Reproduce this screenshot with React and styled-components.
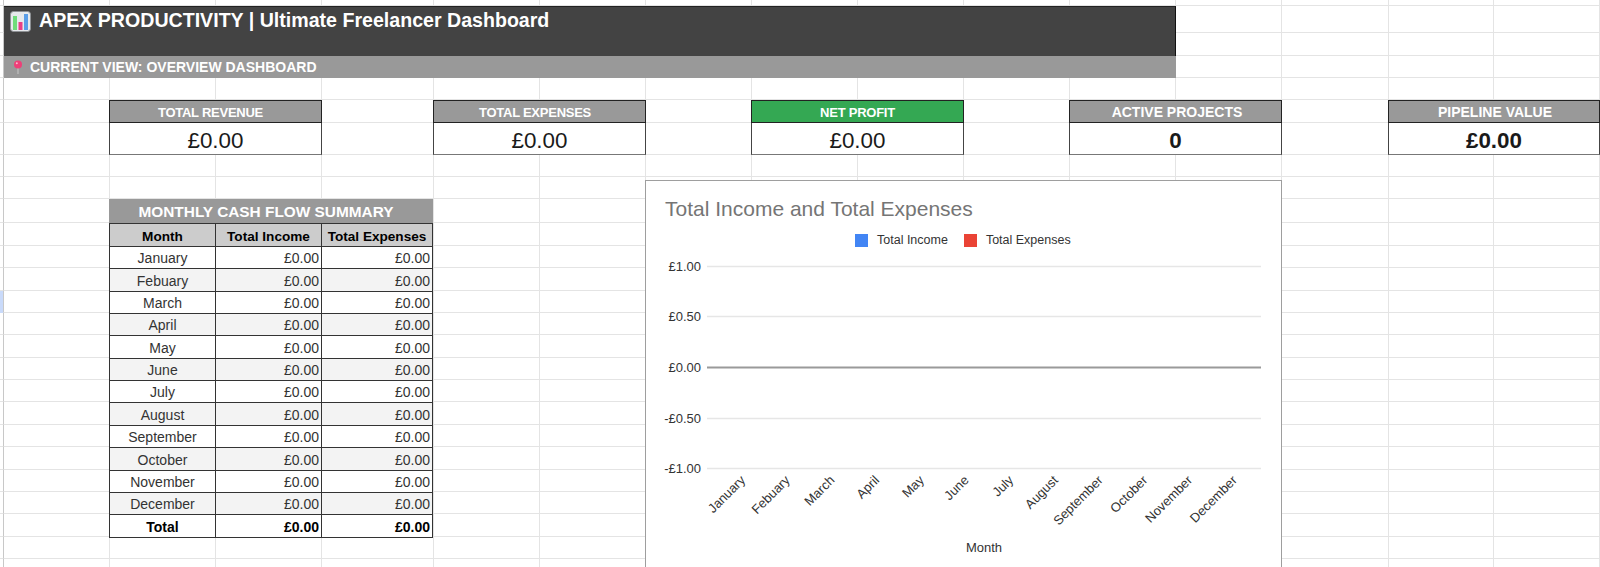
import React from "react";
import styled, { createGlobalStyle } from "styled-components";

const COLUMNS = [4, 106, 106, 106, 112, 106, 106, 106, 106, 106, 106, 106, 106, 107, 105, 106];
const ROWS = [
  6, 27, 23, 22, 22, 23, 32, 22, 22, 24, 23, 22, 23, 22, 22, 23, 22, 22, 23, 22, 23, 22, 22, 23, 22, 23, 7, 1,
];

const MONTHS = [
  "January",
  "Febuary",
  "March",
  "April",
  "May",
  "June",
  "July",
  "August",
  "September",
  "October",
  "November",
  "December",
];

const KPIS = [
  { label: "TOTAL REVENUE", value: "£0.00", col: "3 / 5", size: 13, tight: -0.25, nudge: 10 },
  { label: "TOTAL EXPENSES", value: "£0.00", col: "6 / 8", size: 13, tight: -0.25, nudge: 9 },
  { label: "NET PROFIT", value: "£0.00", col: "9 / 11", size: 13, tight: -0.25, accent: true },
  { label: "ACTIVE PROJECTS", value: "0", col: "12 / 14", size: 14, lead: 3, strong: true },
  { label: "PIPELINE VALUE", value: "£0.00", col: "15 / 17", size: 14, lead: 2, strong: true },
];

const TICKS = [
  { label: "£1.00", y: 266 },
  { label: "£0.50", y: 316 },
  { label: "£0.00", y: 367, zero: true },
  { label: "-£0.50", y: 418 },
  { label: "-£1.00", y: 468 },
];

const App = () => {
  const cells = [];
  ROWS.forEach((_, r) => {
    COLUMNS.forEach((_, c) => {
      cells.push(<GridCell key={`${r}-${c}`} $row={r + 1} $col={c + 1} />);
    });
  });

  return (
    <>
      <GlobalStyle />
      <Sheet>
        {cells}
        <RowMarker />

        <TitleBar>
          <BarChartEmoji />
          APEX PRODUCTIVITY | Ultimate Freelancer Dashboard
        </TitleBar>
        <ViewBar>
          <PinEmoji />
          CURRENT VIEW: OVERVIEW DASHBOARD
        </ViewBar>

        {KPIS.map((kpi) => (
          <React.Fragment key={kpi.label}>
            <KpiLabel
              $col={kpi.col}
              $accent={kpi.accent}
              $size={kpi.size}
              $tight={kpi.tight}
              $nudge={kpi.nudge}
              $lead={kpi.lead}
            >
              {kpi.label}
            </KpiLabel>
            <KpiValue $col={kpi.col} $strong={kpi.strong}>
              {kpi.value}
            </KpiValue>
          </React.Fragment>
        ))}

        <Summary>
          <SummaryTitle>MONTHLY CASH FLOW SUMMARY</SummaryTitle>
          <HeadCell>Month</HeadCell>
          <HeadCell>Total Income</HeadCell>
          <HeadCell>Total Expenses</HeadCell>
          {MONTHS.map((month, i) => (
            <React.Fragment key={month}>
              <MonthCell $alt={i % 2 === 1}>{month}</MonthCell>
              <AmountCell $alt={i % 2 === 1}>£0.00</AmountCell>
              <AmountCell $alt={i % 2 === 1}>£0.00</AmountCell>
            </React.Fragment>
          ))}
          <MonthCell $bold>Total</MonthCell>
          <AmountCell $bold>£0.00</AmountCell>
          <AmountCell $bold>£0.00</AmountCell>
        </Summary>

        <ChartCard>
          <ChartTitle>Total Income and Total Expenses</ChartTitle>
          <Legend>
            <Swatch $color="#4285f4" />
            <LegendLabel>Total Income</LegendLabel>
            <Swatch $color="#ea4335" />
            <LegendLabel>Total Expenses</LegendLabel>
          </Legend>
          <ChartSvg />
        </ChartCard>
      </Sheet>
    </>
  );
};

export default App;

// the drawing starts at page x=645, y=181
const ChartSvg = () => (
  <PlotArea viewBox="646 181 634 385" width="634" height="385">
    {TICKS.map((t) => (
      <g key={t.label}>
        <line
          x1="708"
          x2="1262"
          y1={t.y + 0.5}
          y2={t.y + 0.5}
          stroke={t.zero ? "#9a9a9a" : "#e6e6e6"}
          strokeWidth={t.zero ? 2 : 1.5}
        />
        <AxisText x="702" y={t.y + 4.5} textAnchor="end">
          {t.label}
        </AxisText>
      </g>
    ))}
    {MONTHS.map((month, i) => {
      const x = 747 + i * 44.7;
      return (
        <AxisText key={month} x={x} y="481" textAnchor="end" transform={`rotate(-45 ${x} 481)`}>
          {month}
        </AxisText>
      );
    })}
    <AxisText x="985" y="552" textAnchor="middle">
      Month
    </AxisText>
  </PlotArea>
);

const BarChartEmoji = () => (
  <EmojiBox width="21" height="21" viewBox="0 0 21 21">
    <rect x="0.5" y="0.5" width="20" height="20" rx="3" fill="#e6e9ec" stroke="#8d9094" />
    <rect x="3" y="5" width="4" height="14" fill="#6fdc7a" />
    <rect x="8.5" y="11" width="4" height="8" fill="#ea3f86" />
    <rect x="14" y="3" width="4" height="16" fill="#5a9ee8" />
  </EmojiBox>
);

const PinEmoji = () => (
  <PinBox width="10" height="14" viewBox="0 0 10 14">
    <line x1="5" y1="7" x2="5" y2="14" stroke="#b9b9b9" strokeWidth="1.4" />
    <circle cx="5" cy="4.5" r="4" fill="#ee3f78" />
    <circle cx="3.8" cy="3.2" r="1" fill="#fbb6cd" />
  </PinBox>
);

const GlobalStyle = createGlobalStyle`
  html, body {
    margin: 0;
    padding: 0;
    background: #fff;
    overflow: hidden;
    font-family: "Liberation Sans", Arial, sans-serif;
  }
`;

const Sheet = styled.div`
  display: grid;
  width: 1600px;
  height: 567px;
  grid-template-columns: ${COLUMNS.map((c) => `${c}px`).join(" ")};
  grid-template-rows: ${ROWS.map((r) => `${r}px`).join(" ")};
  overflow: hidden;
`;

const GridCell = styled.div`
  grid-row: ${(p) => p.$row};
  grid-column: ${(p) => p.$col};
  box-sizing: border-box;
  border-right: ${(p) => (p.$col === 1 ? "1px solid #c8c8c8" : "1px solid #e4e4e4")};
  border-bottom: ${(p) => (p.$row === 27 ? "1px solid #bdbdbd" : "1px solid #e4e4e4")};
`;

const RowMarker = styled.div`
  grid-row: 14;
  grid-column: 1;
  margin-right: 1px;
  background: #c9dafa;
`;

const TitleBar = styled.div`
  grid-row: 2 / 4;
  grid-column: 2 / 13;
  display: flex;
  align-items: flex-start;
  gap: 8px;
  box-sizing: border-box;
  padding: 1px 0 0 6px;
  background: #434343;
  border-top: 1px solid #222;
  border-right: 1px solid #111;
  color: #fff;
  font-size: 19.6px;
  font-weight: 700;
  line-height: 24px;
`;

const ViewBar = styled.div`
  grid-row: 4;
  grid-column: 2 / 13;
  display: flex;
  align-items: center;
  box-sizing: border-box;
  padding-left: 9px;
  background: #999;
  color: #fff;
  font-size: 14px;
  font-weight: 700;
`;

const EmojiBox = styled.svg`
  flex: none;
  margin-top: 3px;
`;

const PinBox = styled.svg`
  flex: none;
  margin-right: 7px;
`;

const KpiLabel = styled.div`
  grid-row: 6;
  grid-column: ${(p) => p.$col};
  display: flex;
  align-items: center;
  justify-content: center;
  box-sizing: border-box;
  margin-left: -1px;
  padding: 1px ${(p) => p.$nudge || 0}px 0 ${(p) => p.$lead || 0}px;
  background: ${(p) => (p.$accent ? "#34a853" : "#999")};
  border: 1px solid #222;
  color: #fff;
  font-size: ${(p) => p.$size}px;
  font-weight: 700;
  letter-spacing: ${(p) => p.$tight || 0}px;
`;

const KpiValue = styled.div`
  grid-row: 7;
  grid-column: ${(p) => p.$col};
  display: flex;
  align-items: center;
  justify-content: center;
  box-sizing: border-box;
  margin-left: -1px;
  padding-top: 4px;
  background: #fff;
  border: 1px solid #444;
  border-top: 0;
  border-bottom-color: #777;
  color: #1a1a1a;
  font-size: 22.4px;
  font-weight: ${(p) => (p.$strong ? 700 : 400)};
`;

const Summary = styled.div`
  grid-row: 10 / 25;
  grid-column: 3 / 6;
  display: grid;
  grid-template-columns: subgrid;
  grid-template-rows: subgrid;
  margin-right: 1px;
`;

const SummaryTitle = styled.div`
  grid-column: 1 / 4;
  display: flex;
  align-items: center;
  justify-content: center;
  margin-left: -1px;
  padding: 2px 10px 0 0;
  background: #999;
  color: #fff;
  font-size: 15.4px;
  font-weight: 700;
`;

const Cell = styled.div`
  display: flex;
  align-items: center;
  box-sizing: border-box;
  margin: 0 0 -1px -1px;
  padding-top: 1px;
  border: 1px solid #333;
  color: #333;
  font-size: 14px;
  font-weight: ${(p) => (p.$bold ? 700 : 400)};
  background: ${(p) => (p.$alt ? "#f3f3f3" : "#fff")};
  ${(p) => p.$bold && "color: #000;"}
`;

const HeadCell = styled(Cell)`
  justify-content: center;
  padding-top: 2px;
  background: #ccc;
  color: #000;
  font-size: 13.6px;
  font-weight: 700;
`;

const MonthCell = styled(Cell)`
  justify-content: center;
`;

const AmountCell = styled(Cell)`
  justify-content: flex-end;
  padding-right: 2px;
`;

const ChartCard = styled.div`
  grid-row: 9 / 27;
  grid-column: 8 / 14;
  position: relative;
  z-index: 1;
  margin: 3px 0 0 -1px;
  box-sizing: border-box;
  background: #fff;
  border: 1px solid #9e9e9e;
  border-bottom: 0;
`;

const ChartTitle = styled.div`
  position: absolute;
  left: 19px;
  top: 16px;
  color: #757575;
  font-size: 21px;
  line-height: 24px;
  white-space: nowrap;
`;

const Legend = styled.div`
  position: absolute;
  left: 209px;
  top: 52px;
  display: flex;
  align-items: center;
  height: 14px;
  color: #333;
  font-size: 12.5px;
`;

const Swatch = styled.span`
  width: 13px;
  height: 13px;
  margin-right: 9px;
  background: ${(p) => p.$color};
`;

const LegendLabel = styled.span`
  margin-right: 16px;
  white-space: nowrap;
`;

const PlotArea = styled.svg`
  display: block;
  margin-left: -1px;
`;

const AxisText = styled.text`
  fill: #333;
  font-family: "Liberation Sans", Arial, sans-serif;
  font-size: 13px;
`;
